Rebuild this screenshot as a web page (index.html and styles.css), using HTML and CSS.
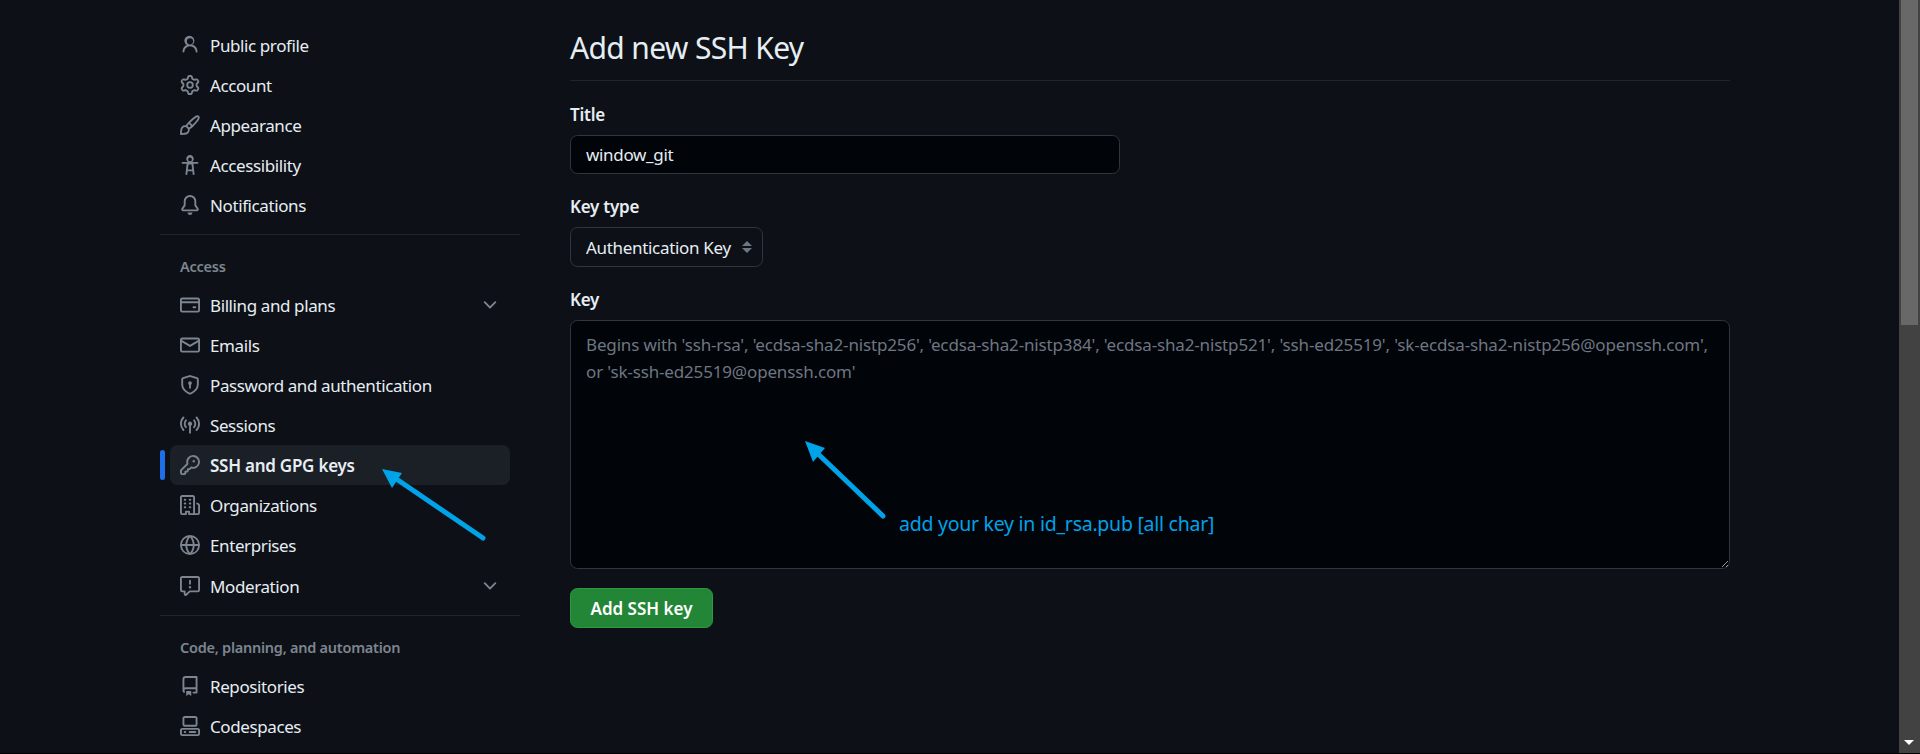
FILE: index.html
```html
<!DOCTYPE html>
<html lang="en">
<head>
<meta charset="utf-8">
<title>Add new SSH Key</title>
<link rel="stylesheet" href="styles.css">
</head>
<body>
<svg class="sprite" width="0" height="0" aria-hidden="true">
  <symbol id="i-person" viewBox="0 0 16 16"><path d="M10.561 8.073a6.005 6.005 0 0 1 3.432 5.142.75.75 0 1 1-1.498.07 4.5 4.5 0 0 0-8.99 0 .75.75 0 0 1-1.498-.07 6.004 6.004 0 0 1 3.431-5.142 3.999 3.999 0 1 1 4.123 0ZM10.5 5a2.5 2.5 0 1 0-5 0 2.5 2.5 0 0 0 5 0Z"/></symbol>
  <symbol id="i-gear" viewBox="0 0 16 16"><path d="M8 0a8.2 8.2 0 0 1 .701.031C9.444.095 9.99.645 10.16 1.29l.288 1.107c.018.066.079.158.212.224.231.114.454.243.668.386.123.082.233.09.299.071l1.103-.303c.644-.176 1.392.021 1.82.63.27.385.506.792.704 1.218.315.675.111 1.422-.364 1.891l-.814.806c-.049.048-.098.147-.088.294.016.257.016.515 0 .772-.01.147.038.246.088.294l.814.806c.475.469.679 1.216.364 1.891a7.977 7.977 0 0 1-.704 1.217c-.428.61-1.176.807-1.82.63l-1.102-.302c-.067-.019-.177-.011-.3.071a5.909 5.909 0 0 1-.668.386c-.133.066-.194.158-.211.224l-.29 1.106c-.168.646-.715 1.196-1.458 1.26a8.006 8.006 0 0 1-1.402 0c-.743-.064-1.289-.614-1.458-1.26l-.289-1.106c-.018-.066-.079-.158-.212-.224a5.738 5.738 0 0 1-.668-.386c-.123-.082-.233-.09-.299-.071l-1.103.303c-.644.176-1.392-.021-1.82-.63a8.12 8.12 0 0 1-.704-1.218c-.315-.675-.111-1.422.363-1.891l.815-.806c.05-.048.098-.147.088-.294a6.214 6.214 0 0 1 0-.772c.01-.147-.038-.246-.088-.294l-.815-.806C.635 6.045.431 5.298.746 4.623a7.92 7.92 0 0 1 .704-1.217c.428-.61 1.176-.807 1.82-.63l1.102.302c.067.019.177.011.3-.071.214-.143.437-.272.668-.386.133-.066.194-.158.211-.224l.29-1.106C6.009.645 6.556.095 7.299.03 7.53.01 7.764 0 8 0Zm-.571 1.525c-.036.003-.108.036-.137.146l-.289 1.105c-.147.561-.549.967-.998 1.189-.173.086-.34.183-.5.29-.417.278-.97.423-1.529.27l-1.103-.303c-.109-.03-.175.016-.195.045-.22.312-.412.644-.573.99-.014.031-.021.11.059.19l.815.806c.411.406.562.957.53 1.456a4.709 4.709 0 0 0 0 .582c.032.499-.119 1.05-.53 1.456l-.815.806c-.081.08-.073.159-.059.19.162.346.353.677.573.989.02.03.085.076.195.046l1.102-.303c.56-.153 1.113-.008 1.53.27.161.107.328.204.501.29.447.222.85.629.997 1.189l.289 1.105c.029.109.101.143.137.146a6.6 6.6 0 0 0 1.142 0c.036-.003.108-.036.137-.146l.289-1.105c.147-.561.549-.967.998-1.189.173-.086.34-.183.5-.29.417-.278.97-.423 1.529-.27l1.103.303c.109.029.175-.016.195-.045.22-.313.411-.644.573-.99.014-.031.021-.11-.059-.19l-.815-.806c-.411-.406-.562-.957-.53-1.456a4.709 4.709 0 0 0 0-.582c-.032-.499.119-1.05.53-1.456l.815-.806c.081-.08.073-.159.059-.19a6.464 6.464 0 0 0-.573-.989c-.02-.03-.085-.076-.195-.046l-1.102.303c-.56.153-1.113.008-1.53-.27a4.44 4.44 0 0 0-.501-.29c-.447-.222-.85-.629-.997-1.189l-.289-1.105c-.029-.11-.101-.143-.137-.146a6.6 6.6 0 0 0-1.142 0ZM11 8a3 3 0 1 1-6 0 3 3 0 0 1 6 0ZM9.5 8a1.5 1.5 0 1 0-3.001.001A1.5 1.5 0 0 0 9.5 8Z"/></symbol>
  <symbol id="i-brush" viewBox="0 0 16 16"><path d="M11.134 1.535c.7-.509 1.416-.942 2.076-1.155.649-.21 1.463-.267 2.069.34.603.601.568 1.411.368 2.07-.202.668-.624 1.39-1.125 2.096-1.011 1.424-2.496 2.987-3.775 4.249-1.098 1.084-2.132 1.839-3.04 2.3a3.744 3.744 0 0 1-1.055 3.217c-.431.431-1.065.691-1.657.861-.614.177-1.294.287-1.914.357A21.151 21.151 0 0 1 .797 16H.743l.007-.75H.749L.742 16a.75.75 0 0 1-.743-.742l.743-.008-.742.007v-.054a21.25 21.25 0 0 1 .13-2.284c.067-.647.187-1.287.358-1.914.17-.591.43-1.226.86-1.657a3.746 3.746 0 0 1 3.227-1.054c.466-.893 1.225-1.907 2.314-2.982 1.271-1.255 2.833-2.75 4.245-3.777ZM1.62 13.089c-.051.464-.086.929-.104 1.395.466-.018.932-.053 1.396-.104a10.511 10.511 0 0 0 1.668-.309c.526-.151.856-.325 1.011-.48a2.25 2.25 0 1 0-3.182-3.182c-.155.155-.329.485-.48 1.01a10.515 10.515 0 0 0-.309 1.67Zm10.396-10.34c-1.224.89-2.605 2.189-3.822 3.384l1.718 1.718c1.21-1.205 2.51-2.597 3.387-3.833.47-.662.78-1.227.912-1.662.134-.444.032-.551.009-.575h-.001V1.78c-.014-.014-.113-.113-.548.027-.432.14-.995.462-1.655.942Zm-4.832 7.266-.001.001a9.859 9.859 0 0 0 1.63-1.142L7.155 7.216a9.7 9.7 0 0 0-1.161 1.607c.482.302.889.71 1.19 1.192Z"/></symbol>
  <symbol id="i-access" viewBox="0 0 16 16"><path d="M9.923 5.302c.063.063.122.129.178.198H14A.75.75 0 0 1 14 7h-3.3l.578 5.163.362 2.997a.75.75 0 0 1-1.49.18L9.868 13H6.132l-.282 2.34a.75.75 0 0 1-1.49-.18l.362-2.997L5.3 7H2a.75.75 0 0 1 0-1.5h3.9a2.54 2.54 0 0 1 .176-.198 3 3 0 1 1 3.847 0ZM9.2 7.5H6.8l-.55 4h3.5l-.55-4ZM8 5a1.5 1.5 0 1 0 0-3 1.5 1.5 0 0 0 0 3Z"/></symbol>
  <symbol id="i-bell" viewBox="0 0 16 16"><path d="M8 16a2 2 0 0 0 1.985-1.75c.017-.137-.097-.25-.235-.25h-3.5c-.138 0-.252.113-.235.25A2 2 0 0 0 8 16ZM3 5a5 5 0 0 1 10 0v2.947c0 .05.015.098.042.139l1.703 2.555A1.519 1.519 0 0 1 13.482 13H2.518a1.516 1.516 0 0 1-1.263-2.36l1.703-2.554A.255.255 0 0 0 3 7.947Zm5-3.5A3.5 3.5 0 0 0 4.5 5v2.947c0 .346-.102.683-.294.97l-1.703 2.556a.017.017 0 0 0-.003.01l.001.006c0 .002.002.004.004.006l.006.004.007.001h10.964l.007-.001.006-.004.004-.006.001-.007a.017.017 0 0 0-.003-.01l-1.703-2.554a1.745 1.745 0 0 1-.294-.97V5A3.5 3.5 0 0 0 8 1.5Z"/></symbol>
  <symbol id="i-card" viewBox="0 0 16 16"><path d="M10.75 9a.75.75 0 0 0 0 1.5h1.5a.75.75 0 0 0 0-1.5h-1.5Z"/><path d="M0 3.75C0 2.784.784 2 1.75 2h12.5c.966 0 1.75.784 1.75 1.75v8.5A1.75 1.75 0 0 1 14.25 14H1.75A1.75 1.75 0 0 1 0 12.25ZM14.5 6.5h-13v5.75c0 .138.112.25.25.25h12.5a.25.25 0 0 0 .25-.25Zm0-2.75a.25.25 0 0 0-.25-.25H1.75a.25.25 0 0 0-.25.25V5h13Z"/></symbol>
  <symbol id="i-mail" viewBox="0 0 16 16"><path d="M1.75 2h12.5c.966 0 1.75.784 1.75 1.75v8.5A1.75 1.75 0 0 1 14.25 14H1.75A1.75 1.75 0 0 1 0 12.25v-8.5C0 2.784.784 2 1.75 2ZM1.5 12.251c0 .138.112.25.25.25h12.5a.25.25 0 0 0 .25-.25V5.809L8.38 9.397a.75.75 0 0 1-.76 0L1.5 5.809v6.442Zm13-8.181v-.32a.25.25 0 0 0-.25-.25H1.75a.25.25 0 0 0-.25.25v.32L8 7.88Z"/></symbol>
  <symbol id="i-shield" viewBox="0 0 16 16"><path d="m8.533.133 5.25 1.68A1.75 1.75 0 0 1 15 3.48V7c0 1.566-.32 3.182-1.303 4.682-.983 1.498-2.585 2.813-5.032 3.855a1.697 1.697 0 0 1-1.33 0c-2.447-1.042-4.049-2.357-5.032-3.855C1.32 10.182 1 8.566 1 7V3.48a1.75 1.75 0 0 1 1.217-1.667l5.25-1.68a1.748 1.748 0 0 1 1.066 0Zm-.61 1.429.001.001-5.25 1.68a.251.251 0 0 0-.174.237V7c0 1.36.275 2.666 1.057 3.859.784 1.194 2.121 2.342 4.366 3.298a.196.196 0 0 0 .154 0c2.245-.957 3.582-2.103 4.366-3.297C13.225 9.666 13.5 8.358 13.5 7V3.48a.25.25 0 0 0-.174-.238l-5.25-1.68a.25.25 0 0 0-.153 0ZM9.5 6.5c0 .536-.286 1.032-.75 1.3v2.45a.75.75 0 0 1-1.5 0V7.8A1.5 1.5 0 1 1 9.5 6.5Z"/></symbol>
  <symbol id="i-broadcast" viewBox="0 0 16 16"><path d="M8.75 8.582v5.668a.75.75 0 0 1-1.5 0V8.582a1.75 1.75 0 1 1 1.5 0Zm3.983-7.125a.75.75 0 0 1 1.06.026A7.976 7.976 0 0 1 16 7c0 2.139-.84 4.083-2.207 5.517a.75.75 0 1 1-1.086-1.034A6.474 6.474 0 0 0 14.5 7a6.474 6.474 0 0 0-1.793-4.483.75.75 0 0 1 .026-1.06Zm-9.466 0c.3.286.312.76.026 1.06A6.474 6.474 0 0 0 1.5 7a6.47 6.47 0 0 0 1.793 4.483.75.75 0 0 1-1.086 1.034A7.973 7.973 0 0 1 0 7c0-2.139.84-4.083 2.207-5.517a.75.75 0 0 1 1.06-.026Zm8.556 2.321A4.988 4.988 0 0 1 13 7a4.988 4.988 0 0 1-1.177 3.222.75.75 0 1 1-1.146-.967A3.487 3.487 0 0 0 11.5 7c0-.86-.309-1.645-.823-2.255a.75.75 0 0 1 1.146-.967Zm-6.492.958A3.48 3.48 0 0 0 4.5 7a3.48 3.48 0 0 0 .823 2.255.75.75 0 0 1-1.146.967A4.981 4.981 0 0 1 3 7a4.982 4.982 0 0 1 1.188-3.236.75.75 0 1 1 1.143.972Z"/></symbol>
  <symbol id="i-key" viewBox="0 0 16 16"><path d="M10.5 0a5.499 5.499 0 1 1-1.288 10.848l-.932.932a.749.749 0 0 1-.53.22H7v.75a.749.749 0 0 1-.22.53l-.5.5a.749.749 0 0 1-.53.22H5v.75a.749.749 0 0 1-.22.53l-.5.5a.749.749 0 0 1-.53.22h-2A1.75 1.75 0 0 1 0 14.25v-2c0-.199.079-.389.22-.53l4.932-4.932A5.5 5.5 0 0 1 10.5 0Zm-4 5.5c-.001.431.069.86.205 1.269a.75.75 0 0 1-.181.768L1.5 12.56v1.69c0 .138.112.25.25.25h1.69l.06-.06v-1.19a.75.75 0 0 1 .75-.75h1.19l.06-.06v-1.19a.75.75 0 0 1 .75-.75h1.19l1.023-1.025a.75.75 0 0 1 .768-.18A4 4 0 1 0 6.5 5.5ZM11 6a1 1 0 1 1 0-2 1 1 0 0 1 0 2Z"/></symbol>
  <symbol id="i-org" viewBox="0 0 16 16"><path d="M1.75 16A1.75 1.75 0 0 1 0 14.25V1.75C0 .784.784 0 1.75 0h8.5C11.216 0 12 .784 12 1.75v12.5c0 .085-.006.168-.018.25h2.268a.25.25 0 0 0 .25-.25V8.285a.25.25 0 0 0-.111-.208l-1.055-.703a.749.749 0 1 1 .832-1.248l1.055.703c.487.325.779.871.779 1.456v5.965A1.75 1.75 0 0 1 14.25 16h-3.5a.766.766 0 0 1-.197-.026c-.099.017-.2.026-.303.026h-3a.75.75 0 0 1-.75-.75V14h-1v1.25a.75.75 0 0 1-.75.75Zm-.25-1.75c0 .138.112.25.25.25H4v-1.25a.75.75 0 0 1 .75-.75h2.5a.75.75 0 0 1 .75.75v1.25h2.25a.25.25 0 0 0 .25-.25V1.75a.25.25 0 0 0-.25-.25h-8.5a.25.25 0 0 0-.25.25ZM3.75 6h.5a.75.75 0 0 1 0 1.5h-.5a.75.75 0 0 1 0-1.5ZM3 3.75A.75.75 0 0 1 3.75 3h.5a.75.75 0 0 1 0 1.5h-.5A.75.75 0 0 1 3 3.75Zm4 3A.75.75 0 0 1 7.75 6h.5a.75.75 0 0 1 0 1.5h-.5A.75.75 0 0 1 7 6.75ZM7.75 3h.5a.75.75 0 0 1 0 1.5h-.5a.75.75 0 0 1 0-1.5ZM3 9.75A.75.75 0 0 1 3.75 9h.5a.75.75 0 0 1 0 1.5h-.5A.75.75 0 0 1 3 9.75ZM7.75 9h.5a.75.75 0 0 1 0 1.5h-.5a.75.75 0 0 1 0-1.5Z"/></symbol>
  <symbol id="i-globe" viewBox="0 0 16 16"><path d="M8 0a8 8 0 1 1 0 16A8 8 0 0 1 8 0ZM5.78 8.75a9.64 9.64 0 0 0 1.363 4.177c.255.426.542.832.857 1.215.245-.296.551-.705.857-1.215A9.64 9.64 0 0 0 10.22 8.75Zm4.44-1.5a9.64 9.64 0 0 0-1.363-4.177c-.307-.51-.612-.919-.857-1.215a9.927 9.927 0 0 0-.857 1.215A9.64 9.64 0 0 0 5.78 7.25Zm-5.944 1.5H1.543a6.507 6.507 0 0 0 4.666 5.5c-.123-.181-.24-.365-.352-.552-.715-1.192-1.437-2.874-1.581-4.948Zm-2.733-1.5h2.733c.144-2.074.866-3.756 1.58-4.948.12-.197.237-.381.353-.552a6.507 6.507 0 0 0-4.666 5.5Zm10.181 1.5c-.144 2.074-.866 3.756-1.58 4.948-.12.197-.237.381-.353.552a6.507 6.507 0 0 0 4.666-5.5Zm2.733-1.5a6.507 6.507 0 0 0-4.666-5.5c.123.181.24.365.353.552.714 1.192 1.436 2.874 1.58 4.948Z"/></symbol>
  <symbol id="i-report" viewBox="0 0 16 16"><path d="M0 1.75C0 .784.784 0 1.75 0h12.5C15.216 0 16 .784 16 1.75v9.5A1.75 1.75 0 0 1 14.25 13H8.06l-2.573 2.573A1.458 1.458 0 0 1 3 14.543V13H1.75A1.75 1.75 0 0 1 0 11.25Zm1.75-.25a.25.25 0 0 0-.25.25v9.5c0 .138.112.25.25.25h2a.75.75 0 0 1 .75.75v2.19l2.72-2.72a.749.749 0 0 1 .53-.22h6.5a.25.25 0 0 0 .25-.25v-9.5a.25.25 0 0 0-.25-.25Zm7 2.25v2.5a.75.75 0 0 1-1.5 0v-2.5a.75.75 0 0 1 1.5 0ZM9 9a1 1 0 1 1-2 0 1 1 0 0 1 2 0Z"/></symbol>
  <symbol id="i-repo" viewBox="0 0 16 16"><path d="M2 2.5A2.5 2.5 0 0 1 4.5 0h8.75a.75.75 0 0 1 .75.75v12.5a.75.75 0 0 1-.75.75h-2.5a.75.75 0 0 1 0-1.5h1.75v-2h-8a1 1 0 0 0-.714 1.7.75.75 0 1 1-1.072 1.05A2.495 2.495 0 0 1 2 11.5Zm10.5-1h-8a1 1 0 0 0-1 1v6.708A2.486 2.486 0 0 1 4.5 9h8ZM5 12.25a.25.25 0 0 1 .25-.25h3.5a.25.25 0 0 1 .25.25v3.25a.25.25 0 0 1-.4.2l-1.45-1.087a.249.249 0 0 0-.3 0L5.4 15.7a.25.25 0 0 1-.4-.2Z"/></symbol>
  <symbol id="i-codespaces" viewBox="0 0 16 16"><path d="M0 11.25c0-.966.784-1.75 1.75-1.75h12.5c.966 0 1.75.784 1.75 1.75v3A1.75 1.75 0 0 1 14.25 16H1.75A1.75 1.75 0 0 1 0 14.25Zm2-9.5C2 .784 2.784 0 3.75 0h8.5C13.216 0 14 .784 14 1.75v5a1.75 1.75 0 0 1-1.75 1.75h-8.5A1.75 1.75 0 0 1 2 6.75Zm1.75-.25a.25.25 0 0 0-.25.25v5c0 .138.112.25.25.25h8.5a.25.25 0 0 0 .25-.25v-5a.25.25 0 0 0-.25-.25Zm-2 9.5a.25.25 0 0 0-.25.25v3c0 .138.112.25.25.25h12.5a.25.25 0 0 0 .25-.25v-3a.25.25 0 0 0-.25-.25Z"/><path d="M7 12.75a.75.75 0 0 1 .75-.75h4.5a.75.75 0 0 1 0 1.5h-4.5a.75.75 0 0 1-.75-.75Zm-4 0a.75.75 0 0 1 .75-.75h.5a.75.75 0 0 1 0 1.5h-.5a.75.75 0 0 1-.75-.75Z"/></symbol>
  <symbol id="i-chevron" viewBox="0 0 16 16"><path d="M12.78 5.22a.749.749 0 0 1 0 1.06l-4.25 4.25a.749.749 0 0 1-1.06 0L3.22 6.28a.749.749 0 1 1 1.06-1.06L8 8.939l3.72-3.719a.749.749 0 0 1 1.06 0Z"/></symbol>
</svg>

<div class="app">
  <div class="page">
    <nav class="sidebar">
      <a class="row"><svg class="icon"><use href="#i-person"/></svg><span>Public profile</span></a>
      <a class="row"><svg class="icon"><use href="#i-gear"/></svg><span>Account</span></a>
      <a class="row"><svg class="icon"><use href="#i-brush"/></svg><span>Appearance</span></a>
      <a class="row"><svg class="icon"><use href="#i-access"/></svg><span>Accessibility</span></a>
      <a class="row"><svg class="icon"><use href="#i-bell"/></svg><span>Notifications</span></a>
      <hr class="divider">
      <div class="group-label">Access</div>
      <a class="row"><svg class="icon"><use href="#i-card"/></svg><span class="grow">Billing and plans</span><svg class="icon"><use href="#i-chevron"/></svg></a>
      <a class="row"><svg class="icon"><use href="#i-mail"/></svg><span>Emails</span></a>
      <a class="row"><svg class="icon"><use href="#i-shield"/></svg><span>Password and authentication</span></a>
      <a class="row"><svg class="icon"><use href="#i-broadcast"/></svg><span>Sessions</span></a>
      <a class="row active"><svg class="icon"><use href="#i-key"/></svg><span>SSH and GPG keys</span></a>
      <a class="row"><svg class="icon"><use href="#i-org"/></svg><span>Organizations</span></a>
      <a class="row"><svg class="icon"><use href="#i-globe"/></svg><span>Enterprises</span></a>
      <a class="row row-gap"><svg class="icon"><use href="#i-report"/></svg><span class="grow">Moderation</span><svg class="icon"><use href="#i-chevron"/></svg></a>
      <hr class="divider">
      <div class="group-label">Code, planning, and automation</div>
      <a class="row"><svg class="icon"><use href="#i-repo"/></svg><span>Repositories</span></a>
      <a class="row"><svg class="icon"><use href="#i-codespaces"/></svg><span>Codespaces</span></a>
    </nav>

    <main class="content">
      <h2 class="subhead">Add new SSH Key</h2>
      <form class="form">
        <label class="label" for="title">Title</label>
        <input class="control title-input" id="title" type="text" value="window_git">
        <label class="label" for="type">Key type</label>
        <div class="select-wrap">
          <select class="control select" id="type"><option>Authentication Key</option></select>
          <svg class="select-arrows" viewBox="0 0 10 16"><path d="M5 2 10 7H0Z"/><path d="M5 14 0 9h10Z"/></svg>
        </div>
        <label class="label" for="key">Key</label>
        <textarea class="control key-area" id="key" placeholder="Begins with 'ssh-rsa', 'ecdsa-sha2-nistp256', 'ecdsa-sha2-nistp384', 'ecdsa-sha2-nistp521', 'ssh-ed25519', 'sk-ecdsa-sha2-nistp256@openssh.com', or 'sk-ssh-ed25519@openssh.com'"></textarea>
        <button class="btn" type="button">Add SSH key</button>
      </form>
    </main>
  </div>

  <div class="scrollbar">
    <div class="thumb"></div>
    <svg class="scroll-arrow" viewBox="0 0 10 5"><path d="M0 0h10L5 5Z"/></svg>
  </div>

  <svg class="annot-arrows" viewBox="0 0 1920 754" aria-hidden="true">
    <line x1="483" y1="538" x2="392" y2="476"/>
    <path d="M382 469 402 473 392 488Z"/>
    <line x1="883" y1="516" x2="814" y2="450"/>
    <path d="M805 441 825 448 813 462Z"/>
  </svg>
  <span class="annot-text">add your key in id_rsa.pub [all char]</span>
</div>
</body>
</html>
```

FILE: styles.css
```css
* { box-sizing: border-box; }

html, body {
  margin: 0;
  height: 100%;
  background: #000;
  overflow: hidden;
}

body {
  font-family: "Noto Sans", "Open Sans", "Liberation Sans", sans-serif;
  font-size: 17px;
  color: #e6edf3;
}

.sprite { position: absolute; }

.app {
  position: relative;
  display: flex;
  height: 753px;
  overflow: hidden;
  background: #0d1117;
}

.page {
  flex: 1;
  display: flex;
  min-width: 0;
  padding-left: 160px;
}

/* Sidebar */
.sidebar {
  width: 360px;
  flex: none;
  padding: 25px 10px 0;
}

.row {
  position: relative;
  display: flex;
  align-items: center;
  gap: 10px;
  height: 40px;
  padding: 0 10px;
  border-radius: 7.5px;
  letter-spacing: -0.4px;
  color: #e6edf3;
}

.row-gap { margin-top: 1px; }

.row.active {
  background: #1b2026;
  font-weight: 600;
  letter-spacing: -0.25px;
}

.row.active::before {
  content: "";
  position: absolute;
  left: -10px;
  top: 5px;
  width: 5px;
  height: 30px;
  border-radius: 5px;
  background: #1f6feb;
}

.grow { flex: 1; }

.icon {
  width: 20px;
  height: 20px;
  flex: none;
  fill: #7d8590;
}

.divider {
  height: 1px;
  margin: 9px -10px 0;
  border: 0;
  background: #21262d;
}

.group-label {
  display: flex;
  align-items: center;
  height: 50px;
  padding: 12px 0 0 10px;
  font-size: 14.5px;
  font-weight: 600;
  letter-spacing: -0.25px;
  color: #7d8590;
}

/* Main column */
.content {
  width: 1160px;
  flex: none;
  margin-left: 50px;
}

.subhead {
  height: 81px;
  margin: 0;
  padding-top: 28px;
  font-size: 30px;
  line-height: 40px;
  font-weight: 400;
  letter-spacing: -0.65px;
  border-bottom: 1px solid #21262d;
}

.form {
  display: flex;
  flex-direction: column;
  align-items: flex-start;
}

.label {
  display: block;
  height: 24px;
  margin: 21px 0 8px;
  line-height: 24px;
  font-weight: 600;
  letter-spacing: -0.25px;
}

.form .label:first-child { margin-top: 22px; }

.control {
  display: block;
  font: inherit;
  color: #e6edf3;
  background: #010409;
  border: 1px solid #30363d;
  border-radius: 7.5px;
  outline: none;
  letter-spacing: -0.32px;
}

.title-input {
  width: 550px;
  height: 39px;
  padding: 0 15px;
}

.select-wrap { position: relative; }

.select {
  width: 193px;
  height: 40px;
  padding: 0 15px;
  background: #0d1117;
  appearance: none;
}

.select-arrows {
  position: absolute;
  right: 11px;
  top: 12px;
  width: 10px;
  height: 16px;
  fill: #6e7681;
  pointer-events: none;
}

.key-area {
  width: 1160px;
  height: 249px;
  padding: 10px 15px;
  line-height: 27px;
  letter-spacing: -0.155px;
  color-scheme: dark;
  resize: vertical;
}

.key-area::placeholder {
  color: #6e7681;
  opacity: 1;
}

.btn {
  width: 143px;
  height: 40px;
  margin-top: 19px;
  padding: 0;
  font: inherit;
  font-weight: 600;
  color: #fff;
  background: #238636;
  border: 1px solid #2e9a40;
  border-radius: 7.5px;
}

/* Scrollbar */
.scrollbar {
  position: relative;
  flex: none;
  width: 21px;
  background: #424242;
  padding: 0 2px;
}

.thumb {
  height: 325px;
  background: #686868;
}

.scroll-arrow {
  position: absolute;
  left: 5px;
  bottom: 8px;
  width: 10px;
  height: 5px;
  fill: #fff;
}

/* Annotations drawn over the page */
.annot-arrows {
  position: absolute;
  inset: 0;
  width: 1920px;
  height: 754px;
  pointer-events: none;
}

.annot-arrows line {
  stroke: #00a2e8;
  stroke-width: 5;
  stroke-linecap: round;
}

.annot-arrows path { fill: #00a2e8; }

.annot-text {
  position: absolute;
  left: 899px;
  top: 510px;
  font-size: 19.5px;
  line-height: 28px;
  letter-spacing: -0.26px;
  color: #00a2e8;
  white-space: nowrap;
}
```
